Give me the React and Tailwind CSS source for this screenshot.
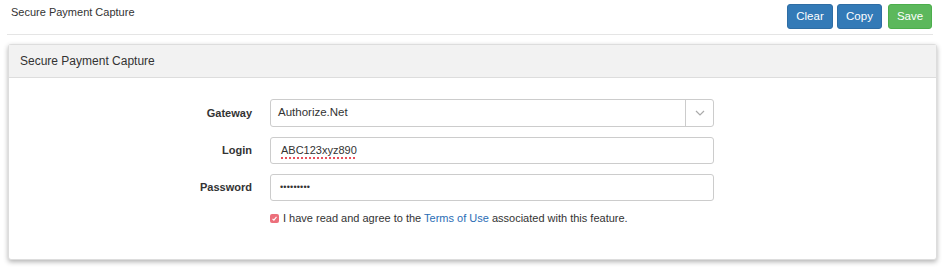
import { useState } from 'react';

function App() {
  const [agreed, setAgreed] = useState(true);

  return (
    <div className="min-h-screen bg-white font-['Liberation_Sans',Arial,sans-serif] text-[12px] text-[#333]">
      <div className="pl-[7px] pr-[11px]">
        <div className="flex items-start justify-between border-b border-[#e5e5e5] pb-[5px] pr-[1px] pt-[4px]">
          <h1 className="pl-[4px] pt-[1px] text-[11px] font-normal leading-[15px] text-[#333]">
            Secure Payment Capture
          </h1>
          <div className="flex items-center">
            <button className="h-[25px] w-[46px] rounded-[3px] border border-[#2e6da4] bg-[#337ab7] text-[11.5px] text-white">
              Clear
            </button>
            <button className="ml-[4px] h-[25px] w-[45px] rounded-[3px] border border-[#2e6da4] bg-[#337ab7] text-[11.5px] text-white">
              Copy
            </button>
            <button className="ml-[6px] h-[25px] w-[44px] rounded-[3px] border border-[#4cae4c] bg-[#5cb85c] text-[11.5px] text-white">
              Save
            </button>
          </div>
        </div>
      </div>

      <div className="ml-[8px] mr-[7px] mt-[9px] rounded-[3px] border border-[#ddd] bg-white shadow-[0_2px_5px_rgba(0,0,0,0.3)]">
        <div className="flex h-[33px] items-center border-b border-[#ddd] bg-[#f2f2f2] px-[11px] text-[12px] text-[#333]">
          Secure Payment Capture
        </div>

        <div className="pb-[32px] pt-[21px]">
          <div className="flex items-center">
            <label className="w-[243px] text-right text-[11px] font-bold text-[#333]">Gateway</label>
            <div className="ml-[18px] flex h-[28px] w-[444px] items-center rounded-[3px] border border-[#ccc] bg-white">
              <span className="flex-1 pl-[7px] text-[11.5px] text-[#333]">Authorize.Net</span>
              <span className="flex h-full w-[28px] items-center justify-center border-l border-[#ccc]">
                <svg width="10" height="6" viewBox="0 0 10 6" fill="none">
                  <path d="M1 1l4 4 4-4" stroke="#aaa" strokeWidth="1.2" />
                </svg>
              </span>
            </div>
          </div>

          <div className="mt-[10px] flex items-center">
            <label className="w-[243px] text-right text-[11px] font-bold text-[#333]">Login</label>
            <div className="ml-[18px] flex h-[27px] w-[444px] items-center rounded-[3px] border border-[#ccc] bg-white pl-[10px]">
              <span className="text-[11px] text-[#333] underline decoration-[#e8505c] decoration-dotted decoration-[1.5px] underline-offset-[3px]">
                ABC123xyz890
              </span>
            </div>
          </div>

          <div className="mt-[10px] flex items-center">
            <label className="w-[243px] text-right text-[11px] font-bold text-[#333]">Password</label>
            <div className="ml-[18px] flex h-[27px] w-[444px] items-center rounded-[3px] border border-[#ccc] bg-white pl-[9px]">
              <span className="text-[9px] tracking-[0.2px] text-[#333]">•••••••••</span>
            </div>
          </div>

          <div className="ml-[261px] mt-[9px] flex items-center">
            <button
              type="button"
              onClick={() => setAgreed(!agreed)}
              className="flex h-[9px] w-[9px] items-center justify-center rounded-[2px] bg-[#ec6f7b]"
            >
              {agreed ? (
                <svg width="7" height="7" viewBox="0 0 7 7" fill="none">
                  <path d="M1.5 3.8l1.4 1.4 2.6-3.4" stroke="#fff" strokeWidth="1.1" />
                </svg>
              ) : null}
            </button>
            <span className="ml-[4px] text-[11px] text-[#333]">
              I have read and agree to the{' '}
              <a href="#" className="text-[#2a6db5]">
                Terms of Use
              </a>{' '}
              associated with this feature.
            </span>
          </div>
        </div>
      </div>
    </div>
  );
}

export default App;
